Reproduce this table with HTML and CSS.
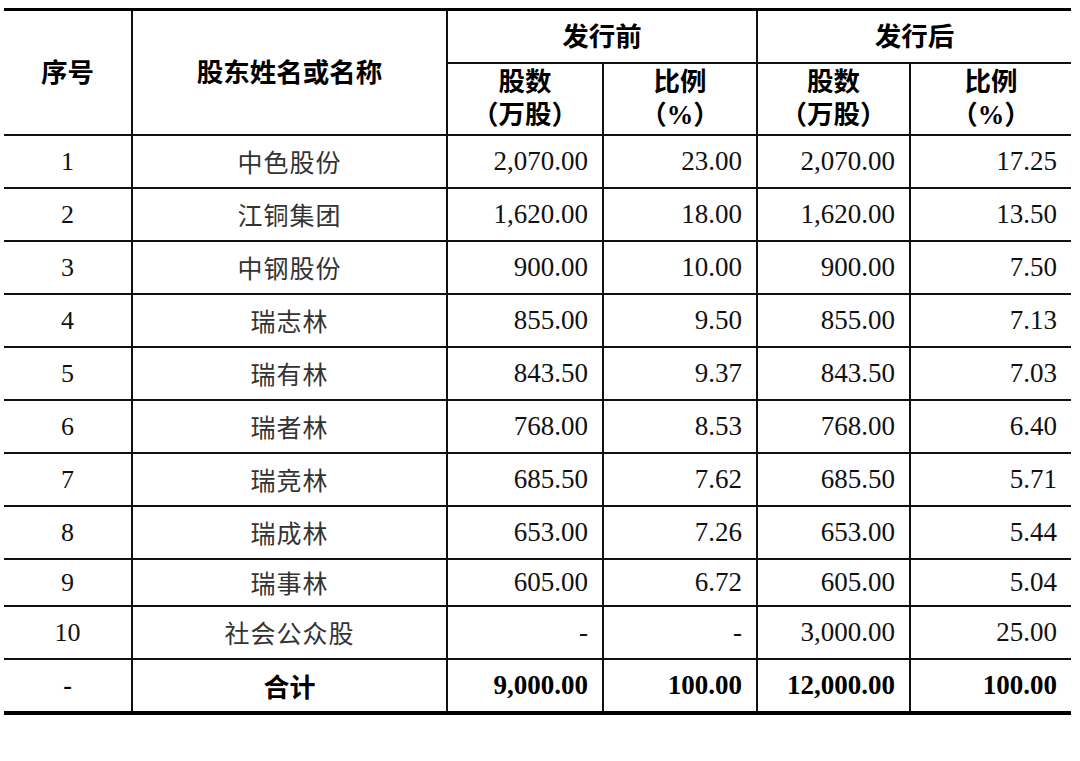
FILE: index.html
```html
<!DOCTYPE html>
<html lang="zh-CN">
<head>
<meta charset="utf-8">
<title>股东持股情况</title>
<link rel="stylesheet" href="styles.css">
</head>
<body>
<table class="holders">
  <colgroup>
    <col class="c-no">
    <col class="c-name">
    <col class="c-n1">
    <col class="c-p1">
    <col class="c-n2">
    <col class="c-p2">
  </colgroup>
  <thead>
    <tr class="h1">
      <th rowspan="2">序号</th>
      <th rowspan="2">股东姓名或名称</th>
      <th colspan="2">发行前</th>
      <th colspan="2">发行后</th>
    </tr>
    <tr class="h2">
      <th>股数<br>（万股）</th>
      <th>比例<br>（%）</th>
      <th>股数<br>（万股）</th>
      <th>比例<br>（%）</th>
    </tr>
  </thead>
  <tbody>
    <tr><td class="ctr">1</td><td class="ctr cn">中色股份</td><td class="num">2,070.00</td><td class="num">23.00</td><td class="num">2,070.00</td><td class="num">17.25</td></tr>
    <tr><td class="ctr">2</td><td class="ctr cn">江铜集团</td><td class="num">1,620.00</td><td class="num">18.00</td><td class="num">1,620.00</td><td class="num">13.50</td></tr>
    <tr><td class="ctr">3</td><td class="ctr cn">中钢股份</td><td class="num">900.00</td><td class="num">10.00</td><td class="num">900.00</td><td class="num">7.50</td></tr>
    <tr><td class="ctr">4</td><td class="ctr cn">瑞志林</td><td class="num">855.00</td><td class="num">9.50</td><td class="num">855.00</td><td class="num">7.13</td></tr>
    <tr><td class="ctr">5</td><td class="ctr cn">瑞有林</td><td class="num">843.50</td><td class="num">9.37</td><td class="num">843.50</td><td class="num">7.03</td></tr>
    <tr><td class="ctr">6</td><td class="ctr cn">瑞者林</td><td class="num">768.00</td><td class="num">8.53</td><td class="num">768.00</td><td class="num">6.40</td></tr>
    <tr><td class="ctr">7</td><td class="ctr cn">瑞竞林</td><td class="num">685.50</td><td class="num">7.62</td><td class="num">685.50</td><td class="num">5.71</td></tr>
    <tr><td class="ctr">8</td><td class="ctr cn">瑞成林</td><td class="num">653.00</td><td class="num">7.26</td><td class="num">653.00</td><td class="num">5.44</td></tr>
    <tr class="short"><td class="ctr">9</td><td class="ctr cn">瑞事林</td><td class="num">605.00</td><td class="num">6.72</td><td class="num">605.00</td><td class="num">5.04</td></tr>
    <tr><td class="ctr">10</td><td class="ctr cn">社会公众股</td><td class="num">-</td><td class="num">-</td><td class="num">3,000.00</td><td class="num">25.00</td></tr>
    <tr class="total"><td class="ctr">-</td><td class="ctr cnb">合计</td><td class="num">9,000.00</td><td class="num">100.00</td><td class="num">12,000.00</td><td class="num">100.00</td></tr>
  </tbody>
</table>
</body>
</html>
```
FILE: styles.css
```css
html, body {
  margin: 0;
  padding: 0;
  background: #ffffff;
}

body {
  padding: 8px 0 0 4px;
}

.holders {
  border-collapse: collapse;
  table-layout: fixed;
  width: 1067px;
  border-top: 3px solid #000;
  border-bottom: 4px solid #000;
  color: #111;
  font-family: "Liberation Serif", "Noto Sans CJK SC", serif;
  font-size: 26px;
}

.c-no { width: 128px; }
.c-name { width: 315px; }
.c-n1 { width: 156px; }
.c-p1 { width: 154px; }
.c-n2 { width: 153px; }
.c-p2 { width: 161px; }

.holders th,
.holders td {
  border: 2px solid #111;
  padding: 0 14px;
  line-height: 33px;
}

.holders tr > :first-child { border-left: none; }
.holders tr > :last-child { border-right: none; }

.holders th {
  font-family: "Liberation Serif", "Noto Sans CJK SC", sans-serif;
  font-weight: 700;
  font-size: 26.5px;
  text-align: center;
  color: #000;
}

.h1 { height: 53px; }
.h1 th[colspan] { padding-top: 2px; }
.h2 { height: 72px; }
.h1 th[rowspan] { padding-top: 2px; }

.holders tbody tr { height: 53px; }
.holders tbody tr.short { height: 47px; }
.holders tbody tr.total { height: 54px; }

.ctr { text-align: center; }
.num { text-align: right; font-size: 27px; }

.cn {
  font-family: "Noto Sans CJK SC", sans-serif;
  font-weight: 400;
  font-size: 25px;
  color: #333;
  letter-spacing: 1px;
}

.total td {
  font-weight: 700;
  color: #000;
}

.cnb {
  font-family: "Noto Sans CJK SC", sans-serif;
  font-weight: 700;
  font-size: 26px;
}
```
